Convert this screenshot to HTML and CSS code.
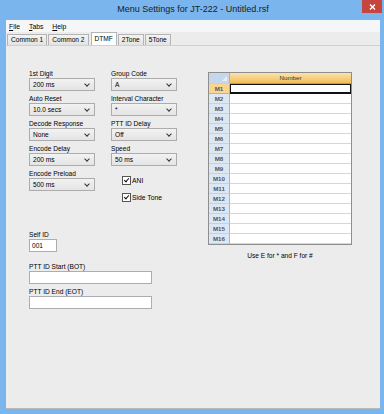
FILE: index.html
```html
<!DOCTYPE html>
<html lang="en">
<head>
    <meta charset="UTF-8">
    <meta name="viewport" content="width=device-width, initial-scale=1.0">
    <title>Menu Settings for JT-222 - Untitled.rsf</title>
    <link rel="stylesheet" href="styles.css">
</head>
<body>
    <div class="window">
        <div class="titlebar">
            <span class="title">Menu Settings for JT-222 - Untitled.rsf</span>
            <div class="close">
                <svg width="7" height="6" viewBox="0 0 7 6"><path d="M1 0.5 L6 5.5 M6 0.5 L1 5.5" stroke="#fff" stroke-width="1.4"/></svg>
            </div>
        </div>
        <div class="client">
            <div class="menubar">
                <span class="menu"><u>F</u>ile</span>
                <span class="menu"><u>T</u>abs</span>
                <span class="menu"><u>H</u>elp</span>
            </div>
            <div class="tabs">
                <div class="tab">Common 1</div>
                <div class="tab">Common 2</div>
                <div class="tab active">DTMF</div>
                <div class="tab">2Tone</div>
                <div class="tab">5Tone</div>
            </div>
            <div class="page">
                <div class="form">
                    <div class="combos">
                        <div class="col">
                            <div class="field"><label>1st Digit</label><div class="combo">200 ms</div></div>
                            <div class="field"><label>Auto Reset</label><div class="combo">10.0 secs</div></div>
                            <div class="field"><label>Decode Response</label><div class="combo">None</div></div>
                            <div class="field"><label>Encode Delay</label><div class="combo">200 ms</div></div>
                            <div class="field"><label>Encode Preload</label><div class="combo">500 ms</div></div>
                        </div>
                        <div class="col">
                            <div class="field"><label>Group Code</label><div class="combo">A</div></div>
                            <div class="field"><label>Interval Character</label><div class="combo">*</div></div>
                            <div class="field"><label>PTT ID Delay</label><div class="combo">Off</div></div>
                            <div class="field"><label>Speed</label><div class="combo">50 ms</div></div>
                            <div class="checks">
                                <div class="check"><span class="box"></span>ANI</div>
                                <div class="check"><span class="box"></span>Side Tone</div>
                            </div>
                        </div>
                    </div>
                    <div class="ids">
                        <div class="field"><label>Self ID</label><div class="textbox short">001</div></div>
                        <div class="field gap"><label>PTT ID Start (BOT)</label><div class="textbox"></div></div>
                        <div class="field"><label>PTT ID End (EOT)</label><div class="textbox"></div></div>
                    </div>
                </div>
                <div class="memory">
                    <div class="grid">
                        <div class="grid-row head">
                            <div class="rowhead corner"></div>
                            <div class="cell">Number</div>
                        </div>
                    </div>
                    <div class="note">Use E for * and F for #</div>
                </div>
            </div>
        </div>
    </div>

    <script>
        const grid = document.querySelector(".grid");
        for (let i = 1; i <= 16; i++) {
            const row = document.createElement("div");
            row.className = i === 1 ? "grid-row current" : "grid-row";
            row.innerHTML = '<div class="rowhead">M' + i + '</div><div class="cell"></div>';
            grid.appendChild(row);
        }
    </script>
</body>
</html>
```

FILE: styles.css
```css
body {
    margin: 0;
    font-family: "Liberation Sans", Arial, sans-serif;
    color: #000;
}
.window {
    width: 384px;
    height: 414px;
    box-sizing: border-box;
    background-color: #7ab5ee;
    padding: 0 4px 5px 6px;
    display: flex;
    flex-direction: column;
}
.titlebar {
    height: 20px;
    flex: none;
    display: flex;
    align-items: center;
    justify-content: center;
    position: relative;
}
.title {
    font-size: 9px;
    color: #1b1b1b;
    margin-top: -2px;
}
.close {
    position: absolute;
    top: 0;
    right: -2px;
    width: 20px;
    height: 13px;
    background-color: #c7453f;
    display: flex;
    align-items: center;
    justify-content: center;
}
.client {
    flex: 1;
    background-color: #ececec;
    display: flex;
    flex-direction: column;
}
.menubar {
    height: 12px;
    background-color: #f5f6f7;
    display: flex;
    align-items: center;
    font-size: 6.8px;
    padding-left: 3px;
}
.menu {
    margin-right: 9px;
}
.tabs {
    height: 13px;
    display: flex;
    align-items: flex-end;
    padding-left: 1px;
}
.tab {
    height: 11px;
    box-sizing: border-box;
    border: 1px solid #b4b4b4;
    border-bottom: none;
    background: linear-gradient(#f3f3f3, #e3e3e3);
    font-size: 6.6px;
    line-height: 10px;
    padding: 0 3px;
    margin-right: 1px;
}
.tab.active {
    height: 13px;
    background: #fff;
    padding: 0 3px;
    line-height: 11px;
    margin: 0 1px 0 1px;
}
.page {
    flex: 1;
    border-top: 1px solid #d0d0d0;
    border-bottom: 1px solid #b9b9b9;
    display: flex;
    padding: 23px 0 0 23px;
}
.form {
    width: 179px;
    flex: none;
}
.combos {
    display: flex;
    gap: 16px;
}
.col {
    width: 66px;
}
.field {
    display: flex;
    flex-direction: column;
    margin-bottom: 3px;
}
label {
    font-size: 6.6px;
    line-height: 9px;
    height: 9px;
}
.combo {
    height: 13px;
    box-sizing: border-box;
    border: 1px solid #acacac;
    background: linear-gradient(#f2f2f2, #e4e4e4);
    font-size: 6.6px;
    line-height: 11px;
    padding-left: 3px;
    position: relative;
}
.combo::after {
    content: "";
    position: absolute;
    right: 5px;
    top: 3px;
    width: 3px;
    height: 3px;
    border-right: 1.2px solid #333;
    border-bottom: 1.2px solid #333;
    transform: rotate(45deg);
}
.checks {
    margin: 10px 0 0 11px;
    display: flex;
    flex-direction: column;
    gap: 8px;
}
.check {
    display: flex;
    align-items: center;
    font-size: 6.8px;
    height: 9px;
}
.box {
    width: 9px;
    height: 9px;
    box-sizing: border-box;
    border: 1px solid #555;
    background: #fff;
    margin-right: 1px;
    position: relative;
}
.box::after {
    content: "";
    position: absolute;
    left: 2px;
    top: 0;
    width: 2px;
    height: 4px;
    border-right: 1.5px solid #111;
    border-bottom: 1.5px solid #111;
    transform: rotate(40deg);
}
.ids {
    margin-top: 28px;
}
.textbox {
    height: 13px;
    width: 123px;
    box-sizing: border-box;
    border: 1px solid #abadb3;
    background: #fff;
    font-size: 6.6px;
    line-height: 11px;
    padding-left: 2px;
}
.textbox.short {
    width: 28px;
}
.field.gap {
    margin-top: 10px;
}
.memory {
    margin-top: 3px;
    width: 144px;
}
.grid {
    border: 1px solid #8e8e8e;
    background: #fff;
}
.grid-row {
    display: flex;
    height: 10px;
    box-sizing: border-box;
}
.grid-row.head {
    height: 11px;
}
.rowhead {
    width: 21px;
    flex: none;
    box-sizing: border-box;
    background: #dde7f4;
    border-right: 1px solid #9eb6ce;
    border-bottom: 1px solid #c4d2e2;
    font-size: 6.2px;
    font-weight: bold;
    color: #4a5566;
    line-height: 9px;
    text-align: center;
}
.rowhead.corner {
    background: #c6d6ec;
    position: relative;
}
.rowhead.corner::after {
    content: "";
    position: absolute;
    right: 2px;
    bottom: 2px;
    border-left: 5px solid transparent;
    border-bottom: 5px solid #e9eef6;
}
.cell {
    flex: 1;
    box-sizing: border-box;
    border-bottom: 1px solid #d6d6d6;
}
.head .cell {
    background: linear-gradient(#fbe3ac, #f2bd57);
    border-bottom: 1px solid #c79a45;
    font-size: 6.2px;
    line-height: 10px;
    text-align: center;
    color: #333;
}
.current .rowhead {
    background: #f8d591;
    border-bottom-color: #d8b068;
}
.current .cell {
    border: 1px solid #111;
    border-bottom: 2px solid #111;
}
.note {
    font-size: 6.6px;
    text-align: center;
    margin-top: 7px;
}
```
